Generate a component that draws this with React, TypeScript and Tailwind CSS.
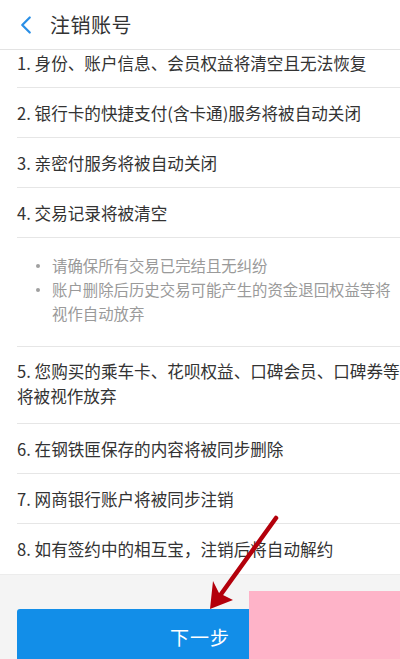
import { ChevronLeft } from 'lucide-react';

const font = { fontFamily: '"Noto Sans CJK SC", "Noto Sans", sans-serif' };

function Row({ children, first }: { children: React.ReactNode; first?: boolean }) {
    return (
        <div className="pl-[17px]">
            <div
                className={
                    first
                        ? 'h-[38px] flex items-start pt-[3px] border-b border-[#e6e6e6] pr-[8px]'
                        : 'h-[50px] flex items-center border-b border-[#e6e6e6] pr-[8px]'
                }
            >
                <span className="text-[16.6px] leading-[20px] text-[#333] whitespace-nowrap">{children}</span>
            </div>
        </div>
    );
}

function Bullet({ children }: { children: React.ReactNode }) {
    return (
        <li className="flex">
            <span className="w-[35px] shrink-0 flex justify-start pl-[19px] pt-[11px]">
                <span className="h-[4px] w-[4px] rounded-full bg-[#a0a0a0]" />
            </span>
            <span>{children}</span>
        </li>
    );
}

export default function App() {
    return (
        <div className="relative w-[400px] h-[659px] overflow-hidden bg-white flex flex-col" style={font}>
            {/* Header */}
            <header className="h-[50px] shrink-0 flex items-center border-b border-[#e3e3e3] bg-white">
                <ChevronLeft className="ml-[11px] h-[30px] w-[30px] text-[#2a8fe6]" strokeWidth={1.8} />
                <span className="ml-[9px] text-[20px] text-[#333] tracking-[0.5px]">注销账号</span>
            </header>

            {/* List */}
            <div className="flex-1 flex flex-col">
                <Row first>1. 身份、账户信息、会员权益将清空且无法恢复</Row>
                <Row>2. 银行卡的快捷支付(含卡通)服务将被自动关闭</Row>
                <Row>3. 亲密付服务将被自动关闭</Row>
                <Row>4. 交易记录将被清空</Row>

                <div className="pl-[17px]">
                    <div className="pt-[15px] pb-[21px] border-b border-[#e6e6e6] pr-[8px]">
                        <ul className="text-[15.4px] leading-[24px] text-[#9a9a9a]">
                            <Bullet>请确保所有交易已完结且无纠纷</Bullet>
                            <Bullet>账户删除后历史交易可能产生的资金退回权益等将视作自动放弃</Bullet>
                        </ul>
                    </div>
                </div>

                <div className="pl-[17px]">
                    <div className="pt-[12px] pb-[14px] border-b border-[#e6e6e6] pr-[4px]">
                        <p className="text-[16.6px] leading-[25px] text-[#333] whitespace-nowrap">
                            5. 您购买的乘车卡、花呗权益、口碑会员、口碑券等
                            <br />
                            将被视作放弃
                        </p>
                    </div>
                </div>

                <Row>6. 在钢铁匣保存的内容将被同步删除</Row>
                <Row>7. 网商银行账户将被同步注销</Row>
                <div className="pl-[17px]">
                    <div className="h-[50px] flex items-center pr-[8px]">
                        <span className="text-[16.6px] leading-[20px] text-[#333] whitespace-nowrap">
                            8. 如有签约中的相互宝，注销后将自动解约
                        </span>
                    </div>
                </div>

                {/* Footer */}
                <div className="flex-1 bg-[#f4f4f4] border-t border-[#ececec] px-[17px] pt-[34px]">
                    <button className="w-full h-[60px] bg-[#128ee8] rounded-t-[3px] flex justify-center pt-[17px]">
                        <span className="text-[19px] leading-[22px] text-white tracking-[1px]">下一步</span>
                    </button>
                </div>
            </div>

            {/* Annotation overlays */}
            <div className="absolute left-[249px] top-[591px] w-[151px] h-[68px] bg-[#feb3c8]" />
            <svg className="absolute left-0 top-0" width="400" height="659" viewBox="0 0 400 659">
                <line x1="276" y1="518" x2="219" y2="597" stroke="#b3000b" strokeWidth="4.5" strokeLinecap="round" />
                <path d="M210 609 L213 581 L219 593 L233 600 Z" fill="#b3000b" />
            </svg>
        </div>
    );
}
